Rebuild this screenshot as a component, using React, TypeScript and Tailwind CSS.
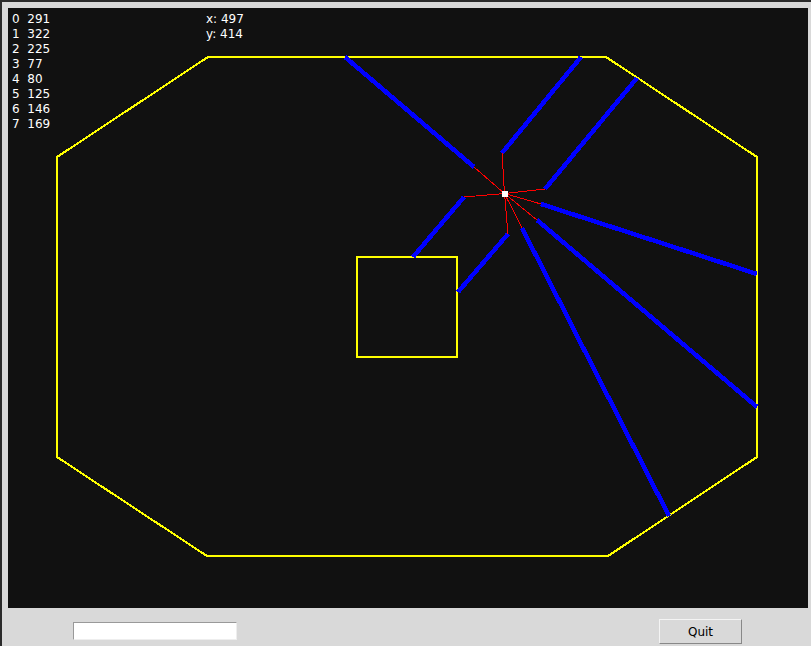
import React from "react";

const robot = { x: 504.5, y: 193.5 };

const rays: { s: [number, number]; e: [number, number] }[] = [
  { s: [474, 167], e: [345, 57] },
  { s: [502, 153], e: [581, 57] },
  { s: [545, 189], e: [637, 78] },
  { s: [541, 204], e: [757, 274] },
  { s: [537, 220], e: [757, 407] },
  { s: [522, 228], e: [669, 516] },
  { s: [508, 234], e: [458, 292] },
  { s: [464, 197], e: [413, 257] },
];

const readings = [
  ["0", "291"],
  ["1", "322"],
  ["2", "225"],
  ["3", "77"],
  ["4", "80"],
  ["5", "125"],
  ["6", "146"],
  ["7", "169"],
];

export default function App() {
  return (
    <div
      className="w-[811px] h-[646px] bg-[#d9d9d9] border-l-2 border-t-2 border-[#2b2b2b] overflow-hidden flex flex-col"
      style={{ fontFamily: "'DejaVu Sans', 'Liberation Sans', sans-serif" }}
    >
      <div className="pl-[6px] pt-[6px]">
        <div className="relative w-[800px] h-[600px] bg-[#111111]">
          <svg width={800} height={600} viewBox="8 8 800 600" className="block" shapeRendering="crispEdges">
            <polygon
              points="208,57 606,57 757,157 757,457 608,556 207,556 57,457 57,157"
              fill="none"
              stroke="#ffff00"
              strokeWidth={2}
            />
            <rect x={357} y={257} width={100} height={100} fill="none" stroke="#ffff00" strokeWidth={2} />
            {rays.map((r, i) => (
              <line
                key={"r" + i}
                x1={robot.x}
                y1={robot.y}
                x2={r.s[0]}
                y2={r.s[1]}
                stroke="#ff0000"
                strokeWidth={1}
              />
            ))}
            {rays.map((r, i) => (
              <line
                key={"b" + i}
                x1={r.s[0]}
                y1={r.s[1]}
                x2={r.e[0]}
                y2={r.e[1]}
                stroke="#0000ff"
                strokeWidth={4.5}
              />
            ))}
            <rect x={502} y={191} width={6} height={6} fill="#ffffff" />
          </svg>
          <div className="absolute left-[4px] top-[4px] text-[12px] leading-[15px] text-white whitespace-pre">
            {readings.map(([a, b]) => (
              <div key={a}>{a + "  " + b}</div>
            ))}
          </div>
          <div className="absolute left-[198px] top-[4px] text-[12px] leading-[15px] text-white whitespace-pre">
            <div>x: 497</div>
            <div>y: 414</div>
          </div>
        </div>
      </div>
      <div className="flex items-start h-[38px]">
        <input
          type="text"
          className="ml-[71px] mt-[14px] w-[164px] h-[18px] bg-white border border-t-[#999999] border-l-[#999999] border-b-[#eeeeee] border-r-[#eeeeee] outline-none"
        />
        <button className="ml-[422px] mt-[11px] w-[83px] h-[25px] bg-[#d9d9d9] border border-t-[#f4f4f4] border-l-[#f4f4f4] border-b-[#888888] border-r-[#888888] text-[12px] text-black flex items-center justify-center">
          Quit
        </button>
      </div>
    </div>
  );
}
